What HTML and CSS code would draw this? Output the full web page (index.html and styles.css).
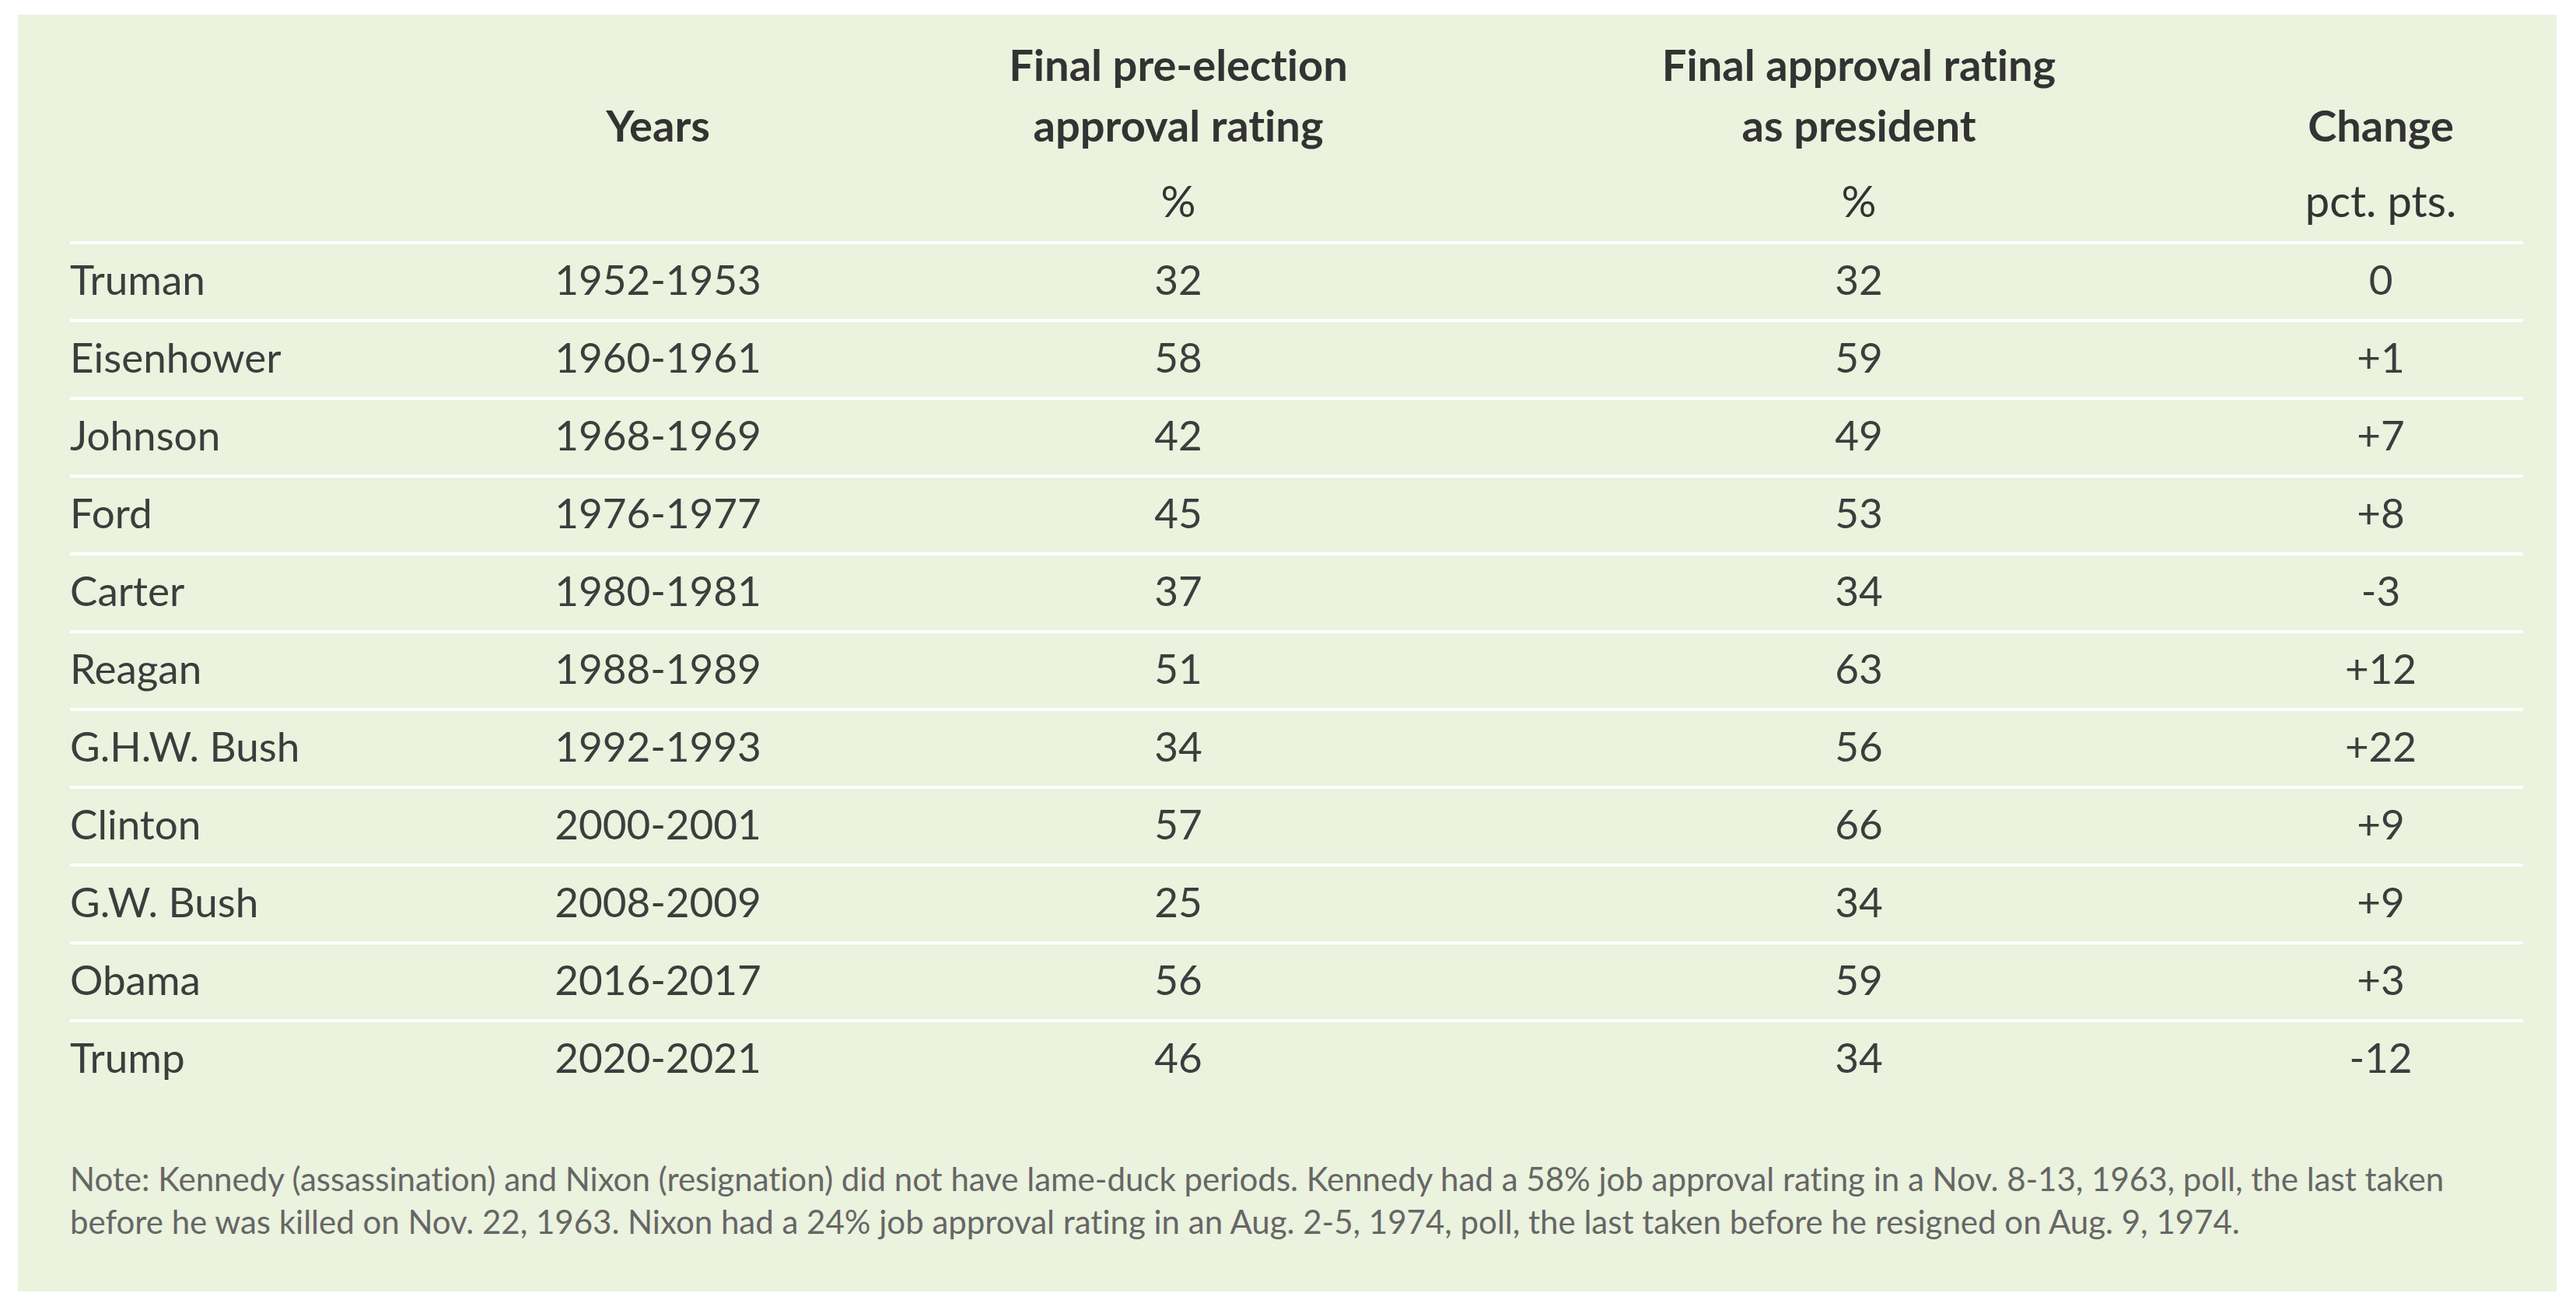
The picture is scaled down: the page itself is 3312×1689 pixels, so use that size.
FILE: index.html
```html
<!DOCTYPE html>
<html lang="en">
<head>
<meta charset="utf-8">
<title>Lame-duck approval ratings</title>
<link rel="stylesheet" href="styles.css">
</head>
<body>
<div class="panel">
  <div class="table">
    <div class="row head">
      <div class="th"><div class="t"></div><div class="u"></div></div>
      <div class="th"><div class="t">Years</div><div class="u"></div></div>
      <div class="th"><div class="t">Final pre-election<br>approval rating</div><div class="u">%</div></div>
      <div class="th"><div class="t">Final approval rating<br>as president</div><div class="u">%</div></div>
      <div class="th"><div class="t">Change</div><div class="u">pct. pts.</div></div>
    </div>
    <div class="row"><div class="name">Truman</div><div class="c">1952-1953</div><div class="c">32</div><div class="c">32</div><div class="c">0</div></div>
    <div class="row"><div class="name">Eisenhower</div><div class="c">1960-1961</div><div class="c">58</div><div class="c">59</div><div class="c">+1</div></div>
    <div class="row"><div class="name">Johnson</div><div class="c">1968-1969</div><div class="c">42</div><div class="c">49</div><div class="c">+7</div></div>
    <div class="row"><div class="name">Ford</div><div class="c">1976-1977</div><div class="c">45</div><div class="c">53</div><div class="c">+8</div></div>
    <div class="row"><div class="name">Carter</div><div class="c">1980-1981</div><div class="c">37</div><div class="c">34</div><div class="c">-3</div></div>
    <div class="row"><div class="name">Reagan</div><div class="c">1988-1989</div><div class="c">51</div><div class="c">63</div><div class="c">+12</div></div>
    <div class="row"><div class="name">G.H.W. Bush</div><div class="c">1992-1993</div><div class="c">34</div><div class="c">56</div><div class="c">+22</div></div>
    <div class="row"><div class="name">Clinton</div><div class="c">2000-2001</div><div class="c">57</div><div class="c">66</div><div class="c">+9</div></div>
    <div class="row"><div class="name">G.W. Bush</div><div class="c">2008-2009</div><div class="c">25</div><div class="c">34</div><div class="c">+9</div></div>
    <div class="row"><div class="name">Obama</div><div class="c">2016-2017</div><div class="c">56</div><div class="c">59</div><div class="c">+3</div></div>
    <div class="row"><div class="name">Trump</div><div class="c">2020-2021</div><div class="c">46</div><div class="c">34</div><div class="c">-12</div></div>
  </div>
  <p class="note">Note: Kennedy (assassination) and Nixon (resignation) did not have lame-duck periods. Kennedy had a 58% job approval rating in a Nov. 8-13, 1963, poll, the last taken<br>before he was killed on Nov. 22, 1963. Nixon had a 24% job approval rating in an Aug. 2-5, 1974, poll, the last taken before he resigned on Aug. 9, 1974.</p>
</div>
</body>
</html>
```
FILE: styles.css
```css
html, body {
  margin: 0;
  padding: 0;
  background: #ffffff;
}

body {
  font-family: Lato, "Liberation Sans", sans-serif;
  font-variant-ligatures: none;
  color: #3d3d3d;
}

.panel {
  margin: 19px 25px 27px 23px;
  background: #ebf2de;
  padding: 25px 43px 62px 67px;
}

.row {
  display: grid;
  grid-template-columns: 474px 564px 774px 976px 366px;
}

.head {
  padding-bottom: 13px;
}

.th {
  display: flex;
  flex-direction: column;
  text-align: center;
  font-weight: 700;
  font-size: 56px;
  line-height: 78px;
  color: #333333;
}

.th .t {
  height: 156px;
  display: flex;
  flex-direction: column;
  justify-content: flex-end;
}

.th .u {
  margin-top: 19px;
  height: 78px;
  font-weight: 400;
}

.row:not(.head) {
  border-top: 4px solid #ffffff;
  font-size: 53px;
  line-height: 90px;
  padding-bottom: 6px;
}

.name {
  text-align: left;
}

.c {
  text-align: center;
}

.note {
  margin: 78px 0 0;
  font-size: 42px;
  line-height: 55px;
  color: #666666;
  white-space: nowrap;
}
```
